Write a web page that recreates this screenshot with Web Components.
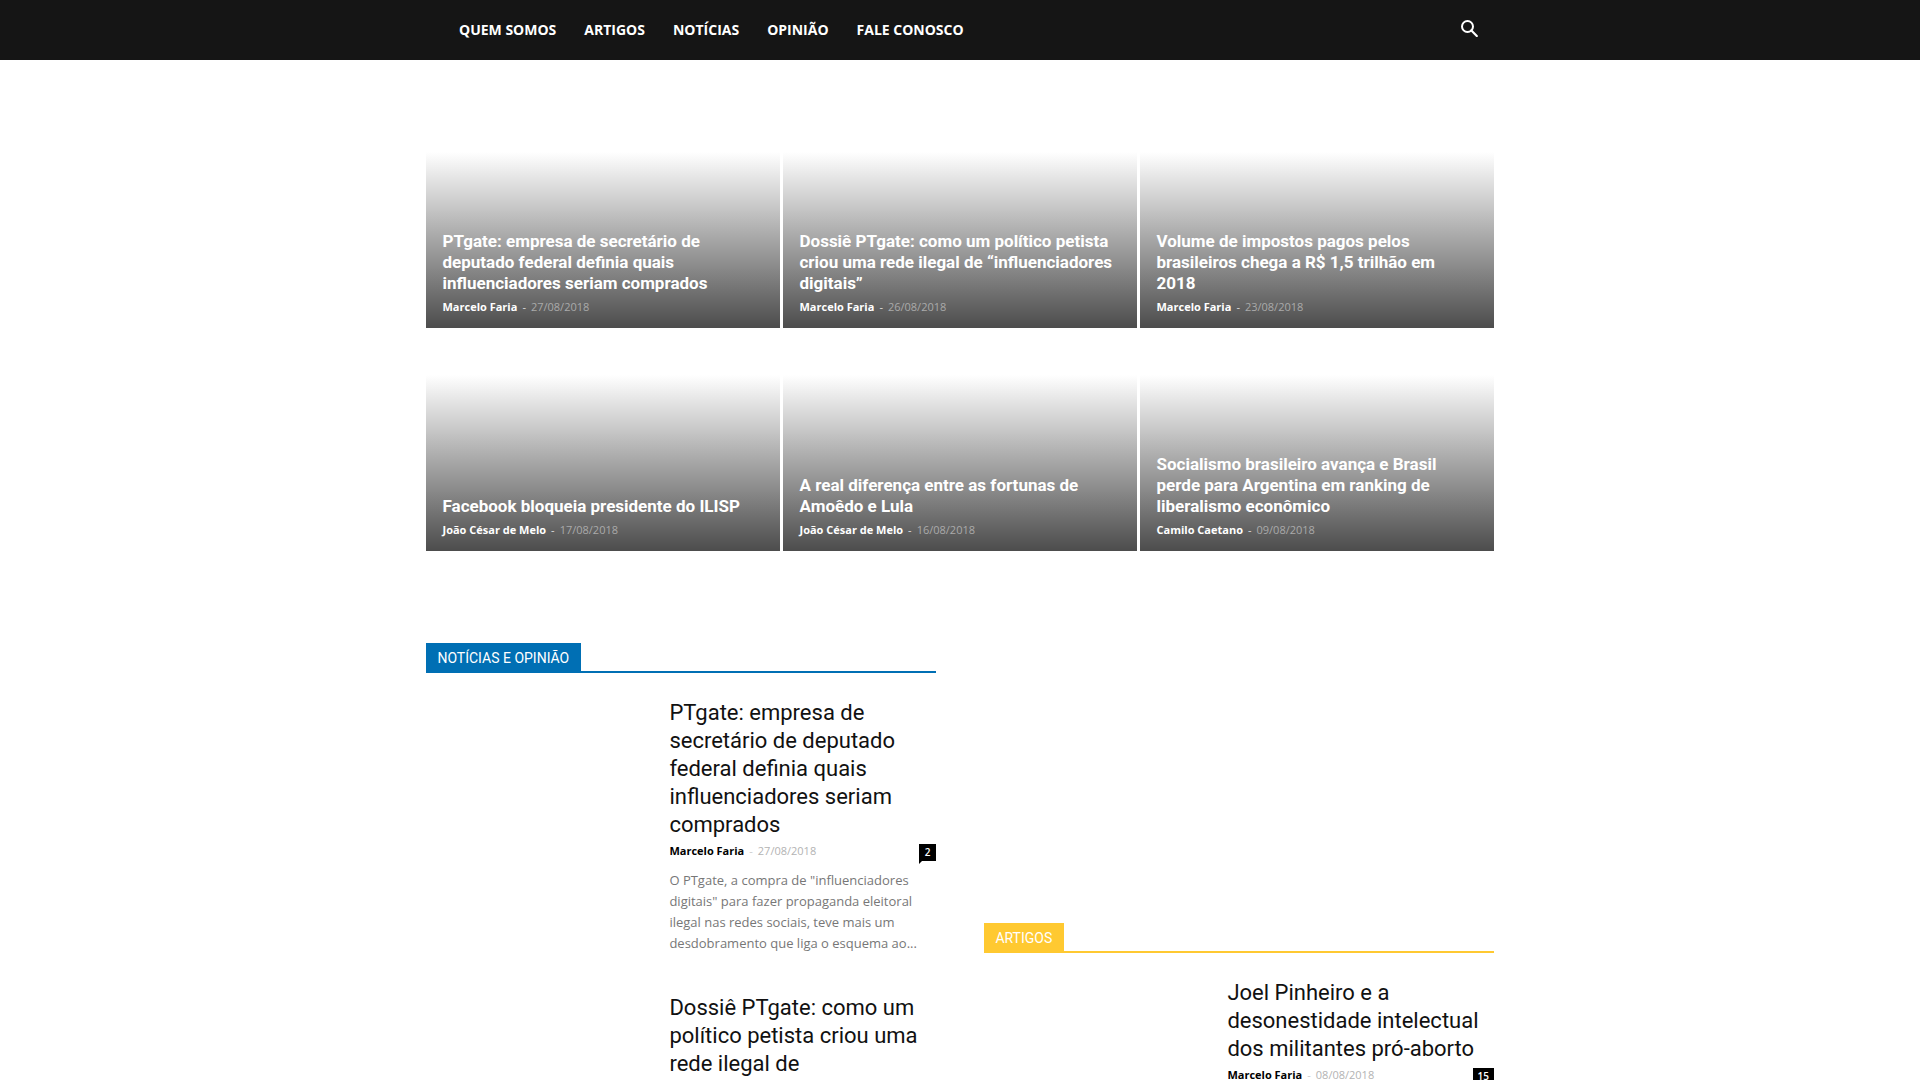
<!DOCTYPE html>
<html lang="pt-BR">
<head>
<meta charset="utf-8">
<title>ILISP</title>
<style>
html,body{margin:0;height:1080px;overflow:hidden;background:#fff}
body{font-family:"Open Sans",sans-serif}
</style>
</head>
<body>
<ilisp-page></ilisp-page>
<script>
const define = (name, html) => customElements.define(name, class extends HTMLElement {
  constructor() {
    super();
    const t = document.createElement('template');
    t.innerHTML = html;
    this.attachShadow({mode: 'open'}).append(t.content.cloneNode(true));
  }
});

define('site-header', `
<style>
:host{display:block;background:#151515;height:60px}
.in{width:1068px;margin:0 auto;display:flex;justify-content:space-between;height:60px}
nav{display:flex;padding-left:19px}
a{padding:0 14px;font:700 14px/60px "Open Sans",sans-serif;color:#fff;text-transform:uppercase}
svg{display:block;margin:20px 16px 0 0}
</style>
<div class="in"><nav><a>Quem somos</a><a>Artigos</a><a>Notícias</a><a>Opinião</a><a>Fale Conosco</a></nav>
<svg width="17" height="17" viewBox="0 0 17 17" fill="none" stroke="#fff" stroke-width="2"><circle cx="6.5" cy="6.5" r="5.5"/><path d="M10.4 10.4 15.8 15.9" stroke-linecap="round" stroke-width="2.2"/></svg></div>`);

define('post-meta', `
<style>
:host{display:block;font:400 11px/17px "Open Sans",sans-serif;color:var(--dim,#b3b3b3)}
.row{display:flex;white-space:pre}
b{font-weight:700;color:var(--name,#000)}
i{font-style:normal;margin:0 5px;color:var(--dash,#ccc)}
</style>
<div class="row"><b><slot name="by"></slot></b><i>-</i><slot></slot></div>`);

define('grid-card', `
<style>
:host{display:flex;flex-direction:column;justify-content:flex-end;box-sizing:border-box;height:220px;padding:0 20px 13px 16.5px;
background:linear-gradient(to bottom,rgba(0,0,0,0) 20%,rgba(0,0,0,.7) 100%);--name:#fff;--dash:#ddd;--dim:#aaa}
h3{margin:0 0 4px;font:700 17px/21px Roboto,sans-serif;color:#fff}
</style>
<h3><slot></slot></h3><post-meta><slot name="by" slot="by"></slot><slot name="date"></slot></post-meta>`);

define('block-title', `
<style>
:host{display:flex;border-bottom:2px solid var(--c)}
span{background:var(--c);color:#fff;font:400 14px/17px Roboto,sans-serif;padding:7px 12px 4px 11.4px;text-transform:uppercase}
</style>
<span><slot></slot></span>`);

define('comment-count', `
<style>
:host{display:block;position:relative;background:#000;color:#fff;font:600 10px/17px "Open Sans",sans-serif;height:17px;min-width:17px;box-sizing:border-box;padding:0 5px;text-align:center}
:host::after{content:"";position:absolute;left:0;top:17px;border-style:solid;border-width:3px 3px 0 0;border-color:#000 transparent transparent}
</style><slot></slot>`);

define('post-item', `
<style>
:host{display:block;padding-left:243.4px}
h3{margin:0 0 5px;font:400 22px/28px Roboto,sans-serif;color:#111}
.m{display:flex;justify-content:space-between;height:17px}
post-meta{line-height:13px}
p{margin:0;padding:9px 0 1px;font:400 13px/21px "Open Sans",sans-serif;color:#777}
</style>
<h3><slot></slot></h3>
<div class="m"><post-meta><slot name="by" slot="by"></slot><slot name="date"></slot></post-meta><slot name="n"></slot></div>
<p><slot name="text"></slot></p>`);

define('ilisp-page', `
<style>
:host{display:block;height:1080px;overflow:hidden}
.grid{width:1068px;margin:48px auto 0;display:grid;grid-template-columns:repeat(3,354px);gap:3px}
.cols{width:1068px;margin:92px auto 0;display:flex;gap:48px}
.col{width:510px}
.right{padding-top:280px}
block-title{margin-bottom:26px}
post-item{margin-bottom:39px}
</style>
<site-header></site-header>
<div class="grid">
<grid-card>PTgate: empresa de secretário de deputado federal definia quais influenciadores seriam comprados<span slot="by">Marcelo Faria</span><span slot="date">27/08/2018</span></grid-card>
<grid-card>Dossiê PTgate: como um político petista criou uma rede ilegal de “influenciadores digitais”<span slot="by">Marcelo Faria</span><span slot="date">26/08/2018</span></grid-card>
<grid-card>Volume de impostos pagos pelos brasileiros chega a R$ 1,5 trilhão em 2018<span slot="by">Marcelo Faria</span><span slot="date">23/08/2018</span></grid-card>
<grid-card>Facebook bloqueia presidente do ILISP<span slot="by">João César de Melo</span><span slot="date">17/08/2018</span></grid-card>
<grid-card>A real diferença entre as fortunas de Amoêdo e Lula<span slot="by">João César de Melo</span><span slot="date">16/08/2018</span></grid-card>
<grid-card>Socialismo brasileiro avança e Brasil perde para Argentina em ranking de liberalismo econômico<span slot="by">Camilo Caetano</span><span slot="date">09/08/2018</span></grid-card>
</div>
<div class="cols">
<div class="col">
<block-title style="--c:#006fb4">Notícias e Opinião</block-title>
<post-item>PTgate: empresa de secretário de deputado federal definia quais influenciadores seriam comprados<span slot="by">Marcelo Faria</span><span slot="date">27/08/2018</span><comment-count slot="n">2</comment-count><span slot="text">O PTgate, a compra de "influenciadores digitais" para fazer propaganda eleitoral ilegal nas redes sociais, teve mais um desdobramento que liga o esquema ao...</span></post-item>
<post-item>Dossiê PTgate: como um político petista criou uma rede ilegal de</post-item>
</div>
<div class="col right">
<block-title style="--c:#ffc931">Artigos</block-title>
<post-item>Joel Pinheiro e a desonestidade intelectual dos militantes pró-aborto<span slot="by">Marcelo Faria</span><span slot="date">08/08/2018</span><comment-count slot="n">15</comment-count></post-item>
</div>
</div>`);
</script>
</body>
</html>
